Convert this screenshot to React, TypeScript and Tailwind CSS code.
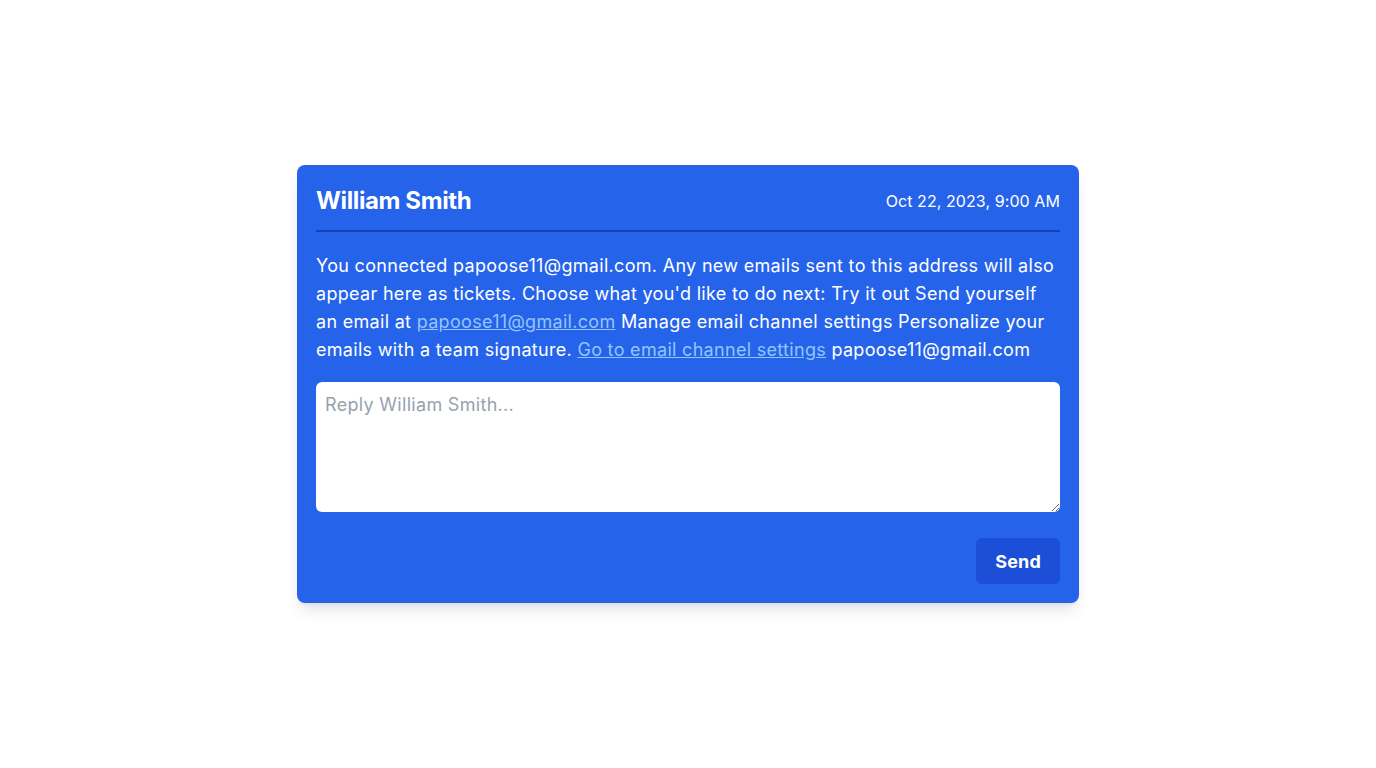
export default function App() {
  return (
    <div
      className="min-h-screen bg-white flex items-center justify-center"
      style={{ fontFamily: 'Inter, "Noto Sans", sans-serif' }}
    >
      <div className="w-[782px] bg-[#2563eb] rounded-lg shadow-lg px-[19px] pt-5 pb-[19px] text-white">
        <div className="flex items-center justify-between pb-[13px] border-b-2 border-[#1e40af]">
          <h2 className="text-2xl font-bold tracking-[-0.016em]">William Smith</h2>
          <span className="text-base tracking-[0.005em]">Oct 22, 2023, 9:00 AM</span>
        </div>

        <p className="mt-5 text-lg leading-7 tracking-[0.017em]">
          You connected papoose11@gmail.com. Any new emails sent to this address will also appear here as
          tickets. Choose what you'd like to do next: Try it out Send yourself an email at{' '}
          <a href="#" className="text-[#93c5fd] underline">papoose11@gmail.com</a> Manage email channel
          settings Personalize your emails with a team signature.{' '}
          <a href="#" className="text-[#93c5fd] underline">Go to email channel settings</a> papoose11@gmail.com
        </p>

        <textarea
          placeholder="Reply William Smith..."
          className="mt-[18px] block w-full h-[130px] rounded-md bg-white text-gray-900 text-lg tracking-[0.017em] px-[9px] py-[9px] placeholder:text-gray-400 outline-none"
        />

        <div className="flex justify-end mt-[26px]">
          <button className="h-[46px] px-[19px] pt-px rounded-md bg-[#1d4ed8] text-lg font-bold text-white tracking-[0.01em]">
            Send
          </button>
        </div>
      </div>
    </div>
  )
}
